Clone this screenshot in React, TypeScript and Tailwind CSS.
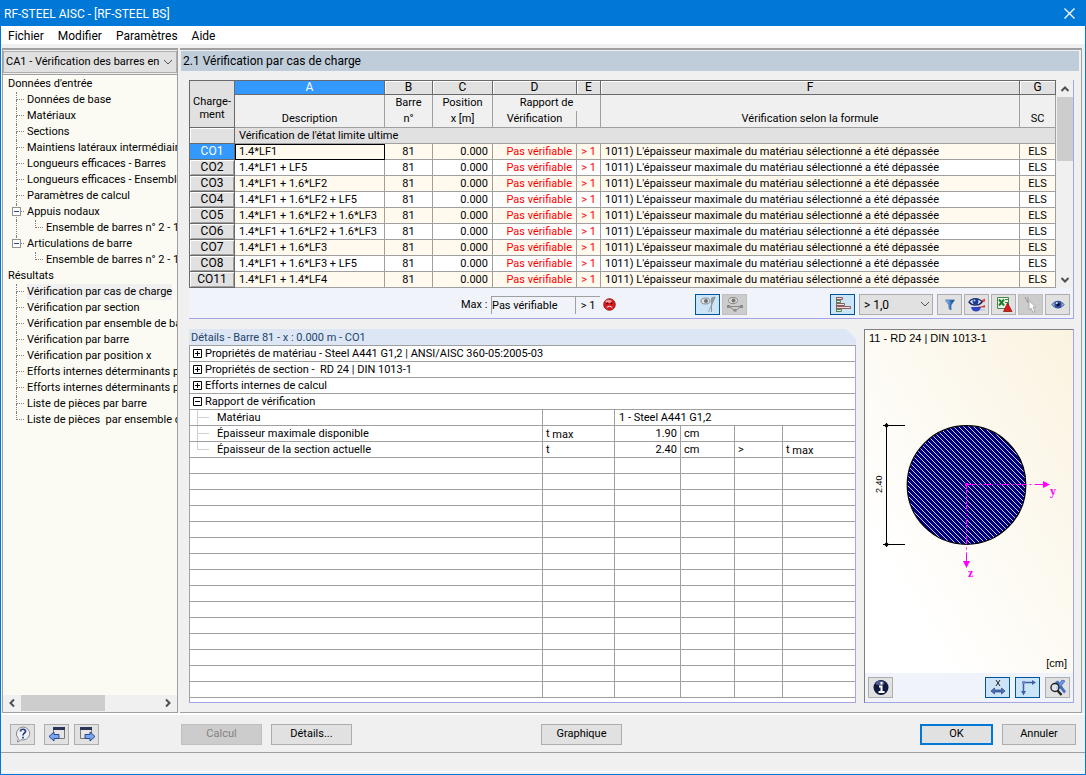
import { useState, type ReactNode } from "react";
import clsx from "clsx";

type TreeItem = {
  label: string;
  children?: string[];
};

const INPUT_ITEMS: TreeItem[] = [
  { label: "Données de base" },
  { label: "Matériaux" },
  { label: "Sections" },
  { label: "Maintiens latéraux intermédiaires" },
  { label: "Longueurs efficaces - Barres" },
  { label: "Longueurs efficaces - Ensembles" },
  { label: "Paramètres de calcul" },
  { label: "Appuis nodaux", children: ["Ensemble de barres n° 2 - 1"] },
  { label: "Articulations de barre", children: ["Ensemble de barres n° 2 - 1"] },
];

const RESULT_ITEMS: TreeItem[] = [
  { label: "Vérification par cas de charge" },
  { label: "Vérification par section" },
  { label: "Vérification par ensemble de barres" },
  { label: "Vérification par barre" },
  { label: "Vérification par position x" },
  { label: "Efforts internes déterminants par barre" },
  { label: "Efforts internes déterminants par ensemble" },
  { label: "Liste de pièces par barre" },
  { label: "Liste de pièces  par ensemble de barres" },
];

const LOAD_CASES = [
  { id: "CO1", description: "1.4*LF1" },
  { id: "CO2", description: "1.4*LF1 + LF5" },
  { id: "CO3", description: "1.4*LF1 + 1.6*LF2" },
  { id: "CO4", description: "1.4*LF1 + 1.6*LF2 + LF5" },
  { id: "CO5", description: "1.4*LF1 + 1.6*LF2 + 1.6*LF3" },
  { id: "CO6", description: "1.4*LF1 + 1.6*LF2 + 1.6*LF3" },
  { id: "CO7", description: "1.4*LF1 + 1.6*LF3" },
  { id: "CO8", description: "1.4*LF1 + 1.6*LF3 + LF5" },
  { id: "CO11", description: "1.4*LF1 + 1.4*LF4" },
];

const MESSAGE = "1011) L'épaisseur maximale du matériau sélectionné a été dépassée";

const DETAIL_GROUPS = [
  { label: "Propriétés de matériau - Steel A441 G1,2 | ANSI/AISC 360-05:2005-03", open: false },
  { label: "Propriétés de section -  RD 24 | DIN 1013-1", open: false },
  { label: "Efforts internes de calcul", open: false },
  { label: "Rapport de vérification", open: true },
];

const EMPTY_ROWS = Array.from({ length: 15 }, (_, i) => i);

function Chevron({
  className,
  d = "M1 3l4 4 4-4",
  bold,
}: {
  className?: string;
  d?: string;
  bold?: boolean;
}) {
  return (
    <svg viewBox="0 0 10 10" className={clsx("size-[10px]", className)} aria-hidden="true">
      <path d={d} fill="none" stroke="currentColor" strokeWidth={bold ? 2 : 1} />
    </svg>
  );
}

function IconButton({
  label,
  state = "normal",
  children,
}: {
  label: string;
  state?: "normal" | "active" | "disabled";
  children: ReactNode;
}) {
  return (
    <button
      type="button"
      aria-label={label}
      disabled={state === "disabled"}
      className={clsx(
        "flex h-[21px] w-[25px] shrink-0 items-center justify-center border",
        state === "normal" && "border-[#adadad] bg-[#e1e1e1]",
        state === "active" && "border-[#005499] bg-[#cce4f7]",
        state === "disabled" && "border-[#bfbfbf] bg-[#cccccc]",
      )}
    >
      <svg viewBox="0 0 18 17" className="h-[17px] w-[18px]" aria-hidden="true">
        {children}
      </svg>
    </button>
  );
}

function TextButton({
  children,
  className,
  disabled,
}: {
  children: ReactNode;
  className: string;
  disabled?: boolean;
}) {
  return (
    <button
      type="button"
      disabled={disabled}
      className={clsx(
        "h-[21px] text-[11px]",
        disabled ? "border border-[#bfbfbf] bg-[#cccccc] text-[#838383]" : "bg-[#e1e1e1]",
        className,
      )}
    >
      {children}
    </button>
  );
}

/* Dotted elbow drawn in front of a tree entry */
function Guide({ last, expandable }: { last: boolean; expandable?: boolean }) {
  return (
    <span className="relative mr-[3px] h-4 w-2 shrink-0">
      <span className="block h-2 border-b border-l border-dotted border-[#808080]" />
      {!last && <span className="block h-2 border-l border-dotted border-[#808080]" />}
      {expandable && (
        <span className="absolute top-[3px] -left-1 flex size-[9px] items-center justify-center border border-[#919191] bg-white">
          <span className="h-px w-[5px] bg-[#2b4a9b]" />
        </span>
      )}
    </span>
  );
}

function TreeGroup({
  title,
  items,
  selected,
  onSelect,
}: {
  title: string;
  items: TreeItem[];
  selected: string;
  onSelect: (label: string) => void;
}) {
  return (
    <li>
      <div className="h-4 pl-[5px]">{title}</div>
      <ul>
        {items.map((item, index) => {
          const last = index === items.length - 1;
          return (
            <li key={item.label}>
              <div className="flex h-4 pl-[13px]">
                <Guide last={last} expandable={!!item.children} />
                <button
                  type="button"
                  onClick={() => onSelect(item.label)}
                  className={clsx(
                    "h-4 shrink-0 text-left whitespace-pre",
                    item.label === selected && "bg-[#f0f0f0]",
                  )}
                >
                  {item.label}
                </button>
              </div>
              {item.children?.map((child) => (
                <div key={child} className="flex h-4 pl-[13px]">
                  <span
                    className={clsx(
                      "w-[19px] shrink-0 border-dotted border-[#808080]",
                      !last && "border-l",
                    )}
                  />
                  <Guide last />
                  <button type="button" className="h-4 shrink-0 whitespace-pre">
                    {child}
                  </button>
                </div>
              ))}
            </li>
          );
        })}
      </ul>
    </li>
  );
}

function Sidebar() {
  const [selected, setSelected] = useState("Vérification par cas de charge");
  return (
    <aside className="flex w-[176px] shrink-0 flex-col border-t-2 border-r border-b border-l border-[#a0a0a0] bg-[#f0f0f0]">
      <div className="relative mt-px">
        <select
          aria-label="Cas de calcul"
          className="block h-[22px] w-full appearance-none overflow-hidden border border-[#adadad] bg-[#e1e1e1] pr-[16px] pl-[2px] text-[11px] text-clip"
        >
          <option>CA1 - Vérification des barres en acier</option>
        </select>
        <Chevron className="pointer-events-none absolute top-[6px] right-1 text-[#505050]" />
      </div>
      <nav className="mt-px flex-1 overflow-hidden border-t border-[#a0a0a0] bg-[#fcfbf3] pt-px text-[11px] leading-4">
        <ul>
          <TreeGroup title="Données d'entrée" items={INPUT_ITEMS} selected={selected} onSelect={setSelected} />
          <TreeGroup title="Résultats" items={RESULT_ITEMS} selected={selected} onSelect={setSelected} />
        </ul>
      </nav>
      <div className="mb-px flex h-4 items-center justify-between pr-1 pl-1 text-[#505050]">
        <Chevron bold d="M7 1.500L3.500 5 7 8.500" />
        <span className="mr-auto ml-1 h-full w-[84px] bg-[#cdcdcd]" />
        <Chevron bold d="M3 1.500L6.500 5 3 8.500" />
      </div>
    </aside>
  );
}

function EyeShape() {
  return (
    <g>
      <path d="M3 8.500C5.500 4.500 12.500 4.500 15 8.500 12.500 13 5.500 13 3 8.500z" fill="#a9b8dc" stroke="#3f5088" />
      <circle cx="9" cy="8.500" r="3.700" fill="#2d4fa6" />
      <circle cx="9" cy="8.500" r="1.800" fill="#050d2e" />
      <circle cx="7.800" cy="7.200" r="1.100" fill="#c9d9fa" />
    </g>
  );
}

function ColumnLetter({ children, active }: { children: string; active?: boolean }) {
  return (
    <th
      className={clsx(
        "h-[14px] border-r border-b border-[#696969] p-0 text-center text-[12px] font-normal",
        active ? "bg-[#3399ff] text-white" : "bg-[#e1e1e1] shadow-[inset_1px_1px_0_#fff]",
      )}
    >
      {children}
    </th>
  );
}

function HeadCell({ children, bottom }: { children?: ReactNode; bottom?: boolean }) {
  return (
    <th
      className={clsx(
        "border-r border-[#a0a0a0] bg-[#f0f0f0] p-0 text-center align-top leading-[15px] font-normal",
        bottom ? "h-[17px] border-b" : "h-4",
      )}
    >
      {children}
    </th>
  );
}

function ResultsTable() {
  const [current, setCurrent] = useState("CO1");
  return (
    <table className="w-full table-fixed border-separate border-spacing-0 border-t border-l border-[#696969] text-[11px] leading-[13px] whitespace-nowrap">
      <colgroup>
        <col className="w-[45px]" />
        <col className="w-[150px]" />
        <col className="w-[48px]" />
        <col className="w-[60px]" />
        <col className="w-[84px]" />
        <col className="w-[24px]" />
        <col />
        <col className="w-[36px]" />
      </colgroup>
      <thead>
        <tr>
          <th
            rowSpan={3}
            className="border-r border-b border-[#696969] bg-[#e1e1e1] p-0 pt-2 text-center font-normal"
          >
            Charge-
            <br />
            ment
          </th>
          <ColumnLetter active>A</ColumnLetter>
          <ColumnLetter>B</ColumnLetter>
          <ColumnLetter>C</ColumnLetter>
          <ColumnLetter>D</ColumnLetter>
          <ColumnLetter>E</ColumnLetter>
          <ColumnLetter>F</ColumnLetter>
          <ColumnLetter>G</ColumnLetter>
        </tr>
        <tr>
          <HeadCell />
          <HeadCell>Barre</HeadCell>
          <HeadCell>Position</HeadCell>
          <th
            colSpan={2}
            className="h-4 border-r border-[#a0a0a0] bg-[#f0f0f0] p-0 text-center align-top leading-[15px] font-normal"
          >
            Rapport de
          </th>
          <HeadCell />
          <HeadCell />
        </tr>
        <tr>
          <HeadCell bottom>Description</HeadCell>
          <HeadCell bottom>n°</HeadCell>
          <HeadCell bottom>x [m]</HeadCell>
          <HeadCell bottom>Vérification</HeadCell>
          <HeadCell bottom />
          <HeadCell bottom>Vérification selon la formule</HeadCell>
          <HeadCell bottom>SC</HeadCell>
        </tr>
      </thead>
      <tbody>
        <tr>
          <th className="h-4 border-r border-b border-[#696969] bg-[#e1e1e1] p-0 shadow-[inset_1px_1px_0_#fff]" />
          <td
            colSpan={7}
            className="h-4 border-r border-b border-[#a0a0a0] bg-[#e1e1e1] px-1 py-0 leading-[15px]"
          >
            Vérification de l'état limite ultime
          </td>
        </tr>
        {LOAD_CASES.map((row, index) => {
          const active = row.id === current;
          const cell = clsx(
            "h-4 border-r border-b border-[#a0a0a0] px-1 py-0 leading-[15px]",
            index % 2 === 0 ? "bg-[#fff9ee]" : "bg-white",
          );
          return (
            <tr key={row.id} onClick={() => setCurrent(row.id)}>
              <th
                scope="row"
                className={clsx(
                  "h-4 border-r border-b border-[#696969] p-0 text-center text-[12px] font-normal",
                  active
                    ? "bg-[#3399ff] text-white"
                    : "bg-[#e1e1e1] shadow-[inset_1px_1px_0_#fff,inset_-1px_-1px_0_#a0a0a0]",
                )}
              >
                {row.id}
              </th>
              <td className={clsx(cell, active && "outline outline-1 -outline-offset-1 outline-black")}>
                {row.description}
              </td>
              <td className={clsx(cell, "text-center")}>81</td>
              <td className={clsx(cell, "text-right")}>0.000</td>
              <td className={clsx(cell, "text-right text-[#ff0000]")}>Pas vérifiable</td>
              <td className={clsx(cell, "text-right text-[#ff0000]")}>&gt; 1</td>
              <td className={cell}>{MESSAGE}</td>
              <td className={clsx(cell, "text-center")}>ELS</td>
            </tr>
          );
        })}
      </tbody>
    </table>
  );
}

function ResultsToolbar() {
  return (
    <div className="flex h-[30px] items-start bg-[#f0f4fa] pt-[6px] pr-[3px] text-[11px]">
      <div className="flex flex-1 items-center pl-[272px] leading-[17px]">
        <span className="w-[30px] shrink-0">Max :</span>
        <span className="h-[18px] w-[85px] shrink-0 border-t border-r border-l border-[#a0a0a0]">Pas vérifiable</span>
        <span className="h-[18px] w-6 shrink-0 border-t border-[#a0a0a0] text-center">&gt; 1</span>
        <svg viewBox="0 0 14 14" className="ml-[3px] size-[13px] shrink-0" aria-label="Échec">
          <circle cx="7" cy="7" r="6.200" fill="#dc1a20" stroke="#8d1216" />
          <ellipse cx="6" cy="3.500" rx="3.500" ry="1.700" fill="#f59a9c" />
          <circle cx="4.800" cy="5.800" r="1" fill="#3a0507" />
          <circle cx="9.200" cy="5.800" r="1" fill="#3a0507" />
          <path d="M4 10.500C5 8.500 9 8.500 10 10.500" fill="none" stroke="#fff" />
        </svg>
        <div className="ml-auto flex gap-[2px] pr-[83px]">
          <IconButton label="Vue de la barre" state="active">
            <path d="M16 1L9.500 16" stroke="#9aa3a8" fill="none" />
            <path d="M12.500 2v14M16 1l-3.500 8V2z" fill="#8e979d" stroke="#8e979d" />
            <ellipse cx="6.500" cy="5" rx="4.500" ry="3" fill="#dfe3e4" stroke="#81898e" />
            <circle cx="7" cy="5" r="2" fill="#697278" />
          </IconButton>
          <IconButton label="Vue de la section" state="disabled">
            <ellipse cx="7" cy="4.500" rx="4.500" ry="3" fill="#dcdcdc" stroke="#8a8a8a" />
            <circle cx="7.500" cy="4.500" r="2" fill="#777" />
            <path d="M2 10.500h14M4 11l5 4 5-4" fill="none" stroke="#8a8a8a" />
            <path d="M1 9h3v3H1zM14 9h3v3h-3zM7.500 13h3v2.500h-3z" fill="#8a8a8a" />
          </IconButton>
        </div>
      </div>
      <div className="flex gap-[2px]">
        <IconButton label="Barres de couleur" state="active">
          <path d="M2.500 1v15" stroke="#555" />
          <g fill="#f8dada" stroke="#86605f">
            <path d="M2.500 1.500h6v2h-6zM2.500 7.500h8v2h-8zM2.500 10.500h14v2h-14z" />
          </g>
          <g fill="#d9f2d9" stroke="#5a805a">
            <path d="M2.500 4.500h4v2h-4zM2.500 13.500h5v2h-5z" />
          </g>
        </IconButton>
        <div className="relative mr-[2px] ml-[2px]">
          <select
            aria-label="Filtre de ratio"
            className="block h-[21px] w-[74px] appearance-none border border-[#adadad] bg-[#e1e1e1] pl-1 text-[12px] leading-[18px]"
          >
            <option>&gt; 1,0</option>
          </select>
          <Chevron className="pointer-events-none absolute top-[5px] right-[3px] text-[#505050]" />
        </div>
        <IconButton label="Filtrer">
          <defs>
            <linearGradient id="funnel">
              <stop offset="0" stopColor="#cfe6fb" />
              <stop offset=".5" stopColor="#3c7fce" />
              <stop offset="1" stopColor="#0c2c6c" />
            </linearGradient>
          </defs>
          <path d="M4.500 4h9l-3.500 5v5l-2-1.500V9z" fill="url(#funnel)" stroke="#3d6cab" strokeWidth=".8" />
        </IconButton>
        <IconButton label="Afficher les couleurs">
          <path d="M10 10.500h3l4-1.500v2.500h-7z" fill="#cf3a3a" />
          <path d="M12 5l5-2.500v3l-4 1.500z" fill="#d84848" />
          <path d="M12 13h5v2h-6z" fill="#c9cde0" />
          <path d="M3 11h10c-1 6-9 6-10 0z" fill="#3043c4" />
          <path d="M1 6C4 1.500 11 1.500 14 6 11 10 4 10 1 6z" fill="#e9effb" stroke="#132968" strokeWidth="1.300" />
          <circle cx="7.500" cy="5.500" r="3" fill="#1b3c91" />
          <circle cx="6.500" cy="4.500" r="1" fill="#c3d5fa" />
        </IconButton>
        <IconButton label="Exporter vers Excel">
          <path d="M2.500 1.500h11v11h-11z" fill="#eaf5ea" stroke="#48884b" />
          <path d="M10 3.500h3M10 6.500h3" stroke="#48884b" />
          <path d="M4 3.500l5 6M9 3.500l-5 6" stroke="#217d2c" strokeWidth="2" />
          <path d="M12.500 7L8.500 15.500h8.500z" fill="#e01818" stroke="#7f0b0b" strokeWidth=".7" />
        </IconButton>
        <IconButton label="Sélectionner" state="disabled">
          <path d="M3 1l3 6M6 1v5" stroke="#9b9b9b" />
          <path d="M7 4.500l6.500 6.500-2.500.3 2 4-2 1-2-4.200L7 14z" fill="#fff" stroke="#9d9d9d" strokeWidth=".8" />
        </IconButton>
        <IconButton label="Mode d'affichage">
          <EyeShape />
        </IconButton>
      </div>
    </div>
  );
}

function Expander({ open }: { open: boolean }) {
  return (
    <svg viewBox="0 0 9 9" className="mr-[3px] size-[9px] shrink-0" aria-hidden="true">
      <path d="M.5.5h8v8h-8zM2 4.500h5" fill="none" stroke="#000" />
      {!open && <path d="M4.500 2v5" stroke="#000" />}
    </svg>
  );
}

function TMax() {
  return (
    <>
      t <span className="relative top-px">max</span>
    </>
  );
}

function DetailsPanel() {
  const line = "h-4 border-b border-[#a0a0a0] py-0";
  const cell = clsx(line, "border-r px-[3px]");
  const branch = (last?: boolean) => (
    <span className="mr-2 ml-[7px] h-[15px] w-3 shrink-0">
      <span className="block h-2 border-b border-l border-[#d0d0d0]" />
      {!last && <span className="block h-[7px] border-l border-[#d0d0d0]" />}
    </span>
  );

  return (
    <section className="flex min-w-0 flex-1 flex-col border-b border-[#a5a5e6]">
      <h2 className="h-4 bg-[#dce6f4] px-[2px] text-[11px] leading-[18px] text-[#1f4468] [clip-path:polygon(0_0,calc(100%-10px)_0,100%_10px,100%_100%,0_100%)]">
        Détails - Barre 81 - x : 0.000 m - CO1
      </h2>
      <div className="flex-1 border-t border-r border-l border-t-[#a0a0a0] border-r-[#a5a5e6] border-l-[#a0a0a0] bg-white">
        <table className="w-full table-fixed border-separate border-spacing-0 text-[11px] leading-[15px] whitespace-pre">
          <colgroup>
            <col />
            <col className="w-[72px]" />
            <col className="w-[66px]" />
            <col className="w-[54px]" />
            <col className="w-[48px]" />
            <col className="w-[72px]" />
          </colgroup>
          <tbody>
            {DETAIL_GROUPS.map((group) => (
              <tr key={group.label}>
                <td colSpan={6} className={clsx(line, "px-[3px]")}>
                  <div className="flex items-center">
                    <Expander open={group.open} />
                    <span>{group.label}</span>
                  </div>
                </td>
              </tr>
            ))}
            <tr>
              <td className={clsx(line, "border-r px-0")}>
                <div className="flex">{branch()}Matériau</div>
              </td>
              <td className={cell} />
              <td colSpan={4} className={clsx(line, "px-1")}>
                1 - Steel A441 G1,2
              </td>
            </tr>
            <tr>
              <td className={clsx(line, "border-r px-0")}>
                <div className="flex">{branch()}Épaisseur maximale disponible</div>
              </td>
              <td className={cell}>
                <TMax />
              </td>
              <td className={clsx(cell, "text-right")}>1.90</td>
              <td className={cell}>cm</td>
              <td className={cell} />
              <td className={clsx(line, "px-[3px]")} />
            </tr>
            <tr>
              <td className={clsx(line, "border-r px-0")}>
                <div className="flex">{branch(true)}Épaisseur de la section actuelle</div>
              </td>
              <td className={cell}>t</td>
              <td className={clsx(cell, "text-right")}>2.40</td>
              <td className={cell}>cm</td>
              <td className={cell}>&gt;</td>
              <td className={clsx(line, "px-[3px]")}>
                <TMax />
              </td>
            </tr>
            {EMPTY_ROWS.map((i) => (
              <tr key={i}>
                <td className={cell} />
                <td className={cell} />
                <td className={cell} />
                <td className={cell} />
                <td className={cell} />
                <td className={line} />
              </tr>
            ))}
          </tbody>
        </table>
      </div>
    </section>
  );
}

function SectionDrawing() {
  return (
    <svg viewBox="0 -2 208 240" className="h-[240px] w-[208px]" role="img" aria-label="Section RD 24">
      <defs>
        <pattern id="hatch" width="5" height="5" patternUnits="userSpaceOnUse">
          <rect width="5" height="5" fill="#000080" />
          <path d="M-1-1l7 7M4-1l2 2M-1 4l2 2" stroke="#e4e4f6" strokeWidth=".9" />
        </pattern>
      </defs>
      <circle cx="101.500" cy="137" r="59.300" fill="url(#hatch)" stroke="#000" strokeWidth="1.200" />
      <g stroke="#000" fill="none">
        <path d="M21.500 75v124M18 77.500h22M18 196.500h22" />
      </g>
      <path d="M21.500 75l2.500 2.500-2.500 2.500-2.500-2.500zM21.500 194l2.500 2.500-2.500 2.500-2.500-2.500z" />
      <text transform="translate(17 145) rotate(-90)" className="font-['Liberation_Sans',Arial,sans-serif] text-[9px]">
        2.40
      </text>
      <g stroke="#ff00ff" fill="none" strokeDasharray="9 3 2 3">
        <path d="M101.500 136.500H178M101.500 136.500V214" />
      </g>
      <g fill="#ff00ff">
        <path d="M100 135h3v3h-3zM178 133l7 3.500-7 3.500zM98 213h7l-3.500 7z" />
        <text x="185" y="147" className="font-['Liberation_Serif',serif] text-[12px] font-bold">
          y
        </text>
        <text x="103" y="229" className="font-['Liberation_Serif',serif] text-[12px] font-bold">
          z
        </text>
      </g>
    </svg>
  );
}

function SectionPreview() {
  return (
    <section className="flex w-[210px] shrink-0 flex-col border-t border-r border-b border-l border-t-[#808080] border-r-[#a5a5e6] border-b-[#a5a5e6] border-l-[#808080]">
      <div className="flex flex-1 flex-col bg-linear-to-tr from-white from-20% to-[#faf3e0] font-['Liberation_Sans',Arial,sans-serif] text-[11px] leading-4">
        <div className="px-1">11 - RD 24 | DIN 1013-1</div>
        <SectionDrawing />
        <div className="mt-auto px-[6px] pb-[2px] text-right">[cm]</div>
      </div>
      <div className="flex h-[29px] items-start gap-[5px] bg-[#f0f4fa] px-[3px] pt-1">
        <IconButton label="Informations">
          <circle cx="9" cy="8.500" r="7.500" fill="#101a3c" />
          <ellipse cx="8" cy="4" rx="4.500" ry="2.200" fill="#4d5c8c" />
          <path d="M9.500 3v2.500M7 7.500h2.500v5M6.500 13h6" stroke="#fff" strokeWidth="2" fill="none" />
        </IconButton>
        <span className="flex-1" />
        <IconButton label="Cotes" state="active">
          <path d="M7 1l4 6M11 1L7 7" stroke="#222" fill="none" />
          <path d="M2 12l3.500-3v2h7V9l3.500 3-3.500 3v-2h-7v2z" fill="#4e74bb" stroke="#26447f" strokeWidth=".7" />
        </IconButton>
        <IconButton label="Axes" state="active">
          <path d="M4.500 13V3.500H14" fill="none" stroke="#3a5e9e" strokeWidth="1.500" />
          <path d="M13 1l4 2.500-4 2.500zM2 12h5l-2.500 4.500z" fill="#3a62ad" />
          <path d="M3 2h3v3H3z" fill="#6c8ccb" />
        </IconButton>
        <IconButton label="Afficher tout">
          <path d="M6 3l3-1.500 8 11-2 2z" fill="#426fc4" />
          <path d="M16 2l-3-1-6 8 2 2z" fill="#6b96e0" stroke="#2e519d" strokeWidth=".6" />
          <circle cx="6" cy="8.500" r="4" fill="#dfe8f5" fillOpacity=".7" stroke="#222" strokeWidth="1.400" />
          <path d="M8.500 11.500l4 4.500" stroke="#222" strokeWidth="2.400" />
        </IconButton>
      </div>
    </section>
  );
}

export default function App() {
  return (
    <div className="flex min-h-screen flex-col border border-[#0078d7] bg-[#f0f0f0] font-['Roboto',Tahoma,sans-serif] text-black">
      <header className="flex h-[25px] items-center justify-between bg-[#0078d7] pr-[10px] pl-[3px] text-white">
        <h1 className="text-[12px]">RF-STEEL AISC - [RF-STEEL BS]</h1>
        <button type="button" aria-label="Fermer">
          <svg viewBox="0 0 11 11" className="size-[11px]" aria-hidden="true">
            <path d="M.5.5l10 10M10.500.5l-10 10" stroke="currentColor" strokeWidth="1.300" />
          </svg>
        </button>
      </header>
      <nav className="mb-1 flex h-[18px] gap-[14px] bg-white pl-[7px] text-[12px] leading-5">
        <button type="button">Fichier</button>
        <button type="button">Modifier</button>
        <button type="button">Paramètres</button>
        <button type="button">Aide</button>
      </nav>

      <main className="flex flex-1 gap-[2px] pr-[3px] pl-px">
        <Sidebar />
        <div className="flex min-w-0 flex-1 flex-col border-t-2 border-r border-b border-[#a0a0a0]">
          <h2 className="mt-px mr-[2px] ml-px h-[20px] bg-[#bfcddb] px-[2px] text-[12px] leading-5">
            2.1 Vérification par cas de charge
          </h2>
          <div className="mt-[9px] mr-[7px] ml-[9px] border-r border-b border-[#a5a5e6]">
            <div className="flex">
              <div className="min-w-0 flex-1">
                <ResultsTable />
              </div>
              <div className="ml-px flex w-4 flex-col items-center bg-[#f0f0f0] text-[#505050]">
                <Chevron bold d="M1.500 7L5 3.500 8.500 7" className="mt-1 mb-[3px]" />
                <span className="h-16 w-full bg-[#cdcdcd]" />
                <Chevron bold d="M1.500 3L5 6.500 8.500 3" className="mt-auto mb-[3px]" />
              </div>
            </div>
            <ResultsToolbar />
          </div>
          <div className="mt-[10px] mr-[7px] mb-[9px] ml-[9px] flex flex-1 gap-2">
            <DetailsPanel />
            <SectionPreview />
          </div>
        </div>
      </main>

      <footer className="border-t-2 border-white">
        <div className="flex h-[37px] items-start pt-[9px] pr-[9px] pl-[9px]">
          <IconButton label="Aide">
            <path d="M9 1a7 6.500 0 1 1-2 12.800L3.500 16l.8-3.500A6.800 6.800 0 0 1 9 1z" fill="#eef1f7" stroke="#888" />
            <path d="M6.500 5.500c0-3 5.500-3 5 0-.3 1.700-2.500 1.800-2.500 4M9 10.800v1.700" stroke="#243d80" strokeWidth="1.700" fill="none" />
          </IconButton>
          <span className="w-[9px]" />
          <IconButton label="Fenêtre précédente">
            <path d="M5.500 1.500h11v11h-11z" fill="#e6e6e6" stroke="#777" />
            <path d="M5 1h12v3H5z" fill="#2b3358" />
            <path d="M1 10.500L6 6v2.500h5v4H6V15z" fill="#7ba6ea" stroke="#24489a" />
          </IconButton>
          <span className="w-[5px]" />
          <IconButton label="Fenêtre suivante">
            <path d="M2.500 1.500h11v11h-11z" fill="#e6e6e6" stroke="#777" />
            <path d="M2 1h12v3H2z" fill="#2b3358" />
            <path d="M17 10.500L12 6v2.500H7v4h5V15z" fill="#7ba6ea" stroke="#24489a" />
          </IconButton>
          <TextButton disabled className="ml-[82px] w-[81px]">
            Calcul
          </TextButton>
          <TextButton className="ml-[9px] w-[81px] border border-[#adadad]">Détails...</TextButton>
          <span className="w-[189px]" />
          <TextButton className="w-[81px] border border-[#adadad]">Graphique</TextButton>
          <TextButton className="ml-auto w-[73px] border-2 border-[#0078d7]">OK</TextButton>
          <TextButton className="ml-[9px] w-[74px] border border-[#adadad]">Annuler</TextButton>
        </div>
        <div className="mb-[2px] h-[20px] border-t border-b border-t-[#a0a0a0] border-b-white" />
      </footer>
    </div>
  );
}
